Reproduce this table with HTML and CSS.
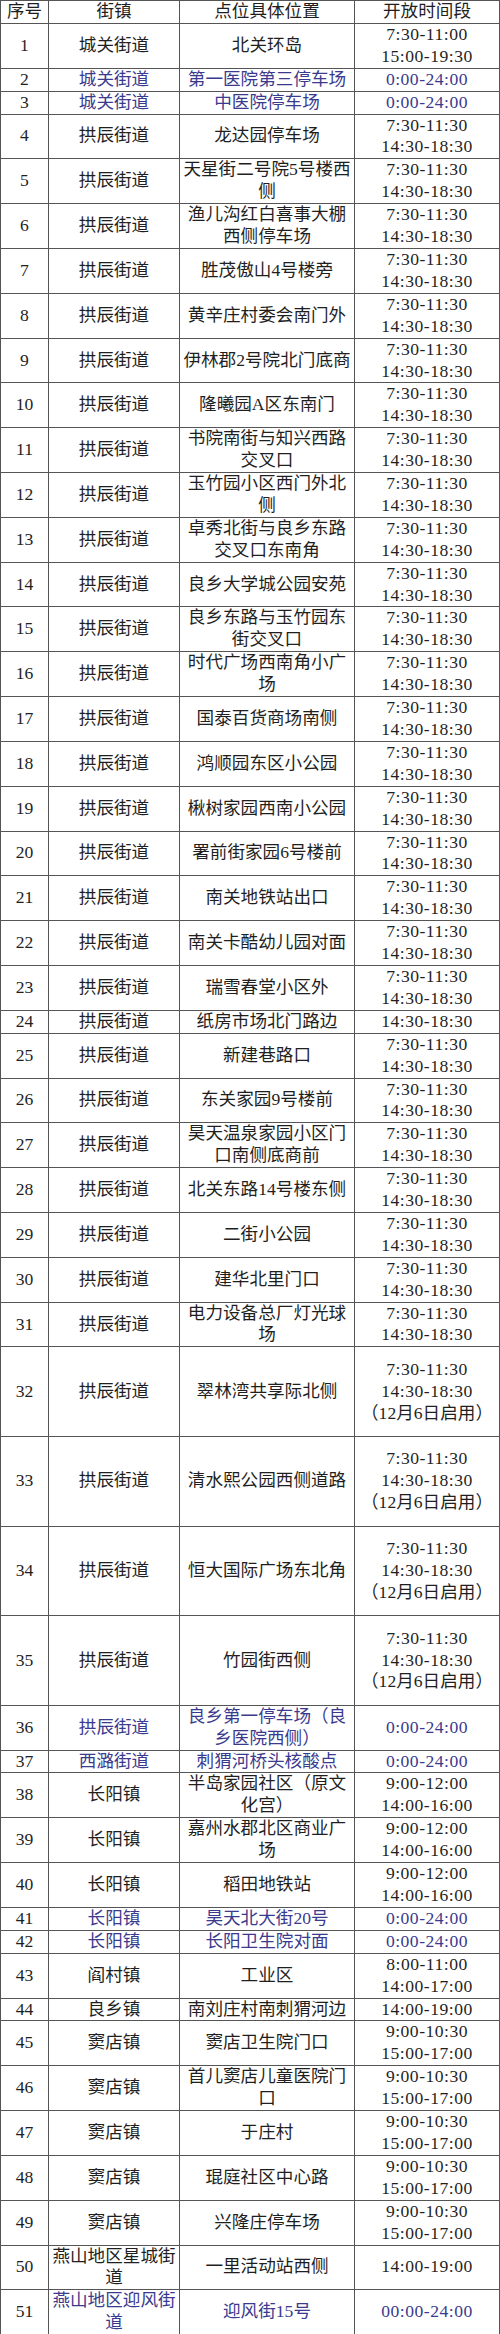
FILE: index.html
```html
<!DOCTYPE html>
<html lang="zh-CN">
<head>
<meta charset="utf-8">
<title>核酸检测点位</title>
<link rel="stylesheet" href="styles.css">
</head>
<body>
<table class="sites">
<colgroup>
<col class="c-no"><col class="c-town"><col class="c-loc"><col class="c-time">
</colgroup>
<thead>
<tr class="l1"><th>序号</th><th>街镇</th><th>点位具体位置</th><th>开放时间段</th></tr>
</thead>
<tbody>
<tr><td>1</td><td>城关街道</td><td>北关环岛</td><td class="t">7:30-11:00<br>15:00-19:30</td></tr>
<tr class="l1 blue"><td>2</td><td>城关街道</td><td>第一医院第三停车场</td><td class="t">0:00-24:00</td></tr>
<tr class="l1 blue"><td>3</td><td>城关街道</td><td>中医院停车场</td><td class="t">0:00-24:00</td></tr>
<tr><td>4</td><td>拱辰街道</td><td>龙达园停车场</td><td class="t">7:30-11:30<br>14:30-18:30</td></tr>
<tr><td>5</td><td>拱辰街道</td><td>天星街二号院5号楼西侧</td><td class="t">7:30-11:30<br>14:30-18:30</td></tr>
<tr><td>6</td><td>拱辰街道</td><td>渔儿沟红白喜事大棚西侧停车场</td><td class="t">7:30-11:30<br>14:30-18:30</td></tr>
<tr><td>7</td><td>拱辰街道</td><td>胜茂傲山4号楼旁</td><td class="t">7:30-11:30<br>14:30-18:30</td></tr>
<tr><td>8</td><td>拱辰街道</td><td>黄辛庄村委会南门外</td><td class="t">7:30-11:30<br>14:30-18:30</td></tr>
<tr><td>9</td><td>拱辰街道</td><td>伊林郡2号院北门底商</td><td class="t">7:30-11:30<br>14:30-18:30</td></tr>
<tr><td>10</td><td>拱辰街道</td><td>隆曦园A区东南门</td><td class="t">7:30-11:30<br>14:30-18:30</td></tr>
<tr><td>11</td><td>拱辰街道</td><td>书院南街与知兴西路交叉口</td><td class="t">7:30-11:30<br>14:30-18:30</td></tr>
<tr><td>12</td><td>拱辰街道</td><td>玉竹园小区西门外北侧</td><td class="t">7:30-11:30<br>14:30-18:30</td></tr>
<tr><td>13</td><td>拱辰街道</td><td>卓秀北街与良乡东路交叉口东南角</td><td class="t">7:30-11:30<br>14:30-18:30</td></tr>
<tr><td>14</td><td>拱辰街道</td><td>良乡大学城公园安苑</td><td class="t">7:30-11:30<br>14:30-18:30</td></tr>
<tr><td>15</td><td>拱辰街道</td><td>良乡东路与玉竹园东街交叉口</td><td class="t">7:30-11:30<br>14:30-18:30</td></tr>
<tr><td>16</td><td>拱辰街道</td><td>时代广场西南角小广场</td><td class="t">7:30-11:30<br>14:30-18:30</td></tr>
<tr><td>17</td><td>拱辰街道</td><td>国泰百货商场南侧</td><td class="t">7:30-11:30<br>14:30-18:30</td></tr>
<tr><td>18</td><td>拱辰街道</td><td>鸿顺园东区小公园</td><td class="t">7:30-11:30<br>14:30-18:30</td></tr>
<tr><td>19</td><td>拱辰街道</td><td>楸树家园西南小公园</td><td class="t">7:30-11:30<br>14:30-18:30</td></tr>
<tr><td>20</td><td>拱辰街道</td><td>署前街家园6号楼前</td><td class="t">7:30-11:30<br>14:30-18:30</td></tr>
<tr><td>21</td><td>拱辰街道</td><td>南关地铁站出口</td><td class="t">7:30-11:30<br>14:30-18:30</td></tr>
<tr><td>22</td><td>拱辰街道</td><td>南关卡酷幼儿园对面</td><td class="t">7:30-11:30<br>14:30-18:30</td></tr>
<tr><td>23</td><td>拱辰街道</td><td>瑞雪春堂小区外</td><td class="t">7:30-11:30<br>14:30-18:30</td></tr>
<tr class="l1"><td>24</td><td>拱辰街道</td><td>纸房市场北门路边</td><td class="t">14:30-18:30</td></tr>
<tr><td>25</td><td>拱辰街道</td><td>新建巷路口</td><td class="t">7:30-11:30<br>14:30-18:30</td></tr>
<tr><td>26</td><td>拱辰街道</td><td>东关家园9号楼前</td><td class="t">7:30-11:30<br>14:30-18:30</td></tr>
<tr><td>27</td><td>拱辰街道</td><td>昊天温泉家园小区门口南侧底商前</td><td class="t">7:30-11:30<br>14:30-18:30</td></tr>
<tr><td>28</td><td>拱辰街道</td><td>北关东路14号楼东侧</td><td class="t">7:30-11:30<br>14:30-18:30</td></tr>
<tr><td>29</td><td>拱辰街道</td><td>二街小公园</td><td class="t">7:30-11:30<br>14:30-18:30</td></tr>
<tr><td>30</td><td>拱辰街道</td><td>建华北里门口</td><td class="t">7:30-11:30<br>14:30-18:30</td></tr>
<tr><td>31</td><td>拱辰街道</td><td>电力设备总厂灯光球场</td><td class="t">7:30-11:30<br>14:30-18:30</td></tr>
<tr class="l4"><td>32</td><td>拱辰街道</td><td>翠林湾共享际北侧</td><td class="t">7:30-11:30<br>14:30-18:30<br><span class="note">（12月6日启用）</span></td></tr>
<tr class="l4"><td>33</td><td>拱辰街道</td><td>清水熙公园西侧道路</td><td class="t">7:30-11:30<br>14:30-18:30<br><span class="note">（12月6日启用）</span></td></tr>
<tr class="l4"><td>34</td><td>拱辰街道</td><td>恒大国际广场东北角</td><td class="t">7:30-11:30<br>14:30-18:30<br><span class="note">（12月6日启用）</span></td></tr>
<tr class="l4"><td>35</td><td>拱辰街道</td><td>竹园街西侧</td><td class="t">7:30-11:30<br>14:30-18:30<br><span class="note">（12月6日启用）</span></td></tr>
<tr class="blue"><td>36</td><td>拱辰街道</td><td>良乡第一停车场（良乡医院西侧）</td><td class="t">0:00-24:00</td></tr>
<tr class="l1 blue"><td>37</td><td>西潞街道</td><td>刺猬河桥头核酸点</td><td class="t">0:00-24:00</td></tr>
<tr><td>38</td><td>长阳镇</td><td>半岛家园社区（原文化宫）</td><td class="t">9:00-12:00<br>14:00-16:00</td></tr>
<tr><td>39</td><td>长阳镇</td><td>嘉州水郡北区商业广场</td><td class="t">9:00-12:00<br>14:00-16:00</td></tr>
<tr><td>40</td><td>长阳镇</td><td>稻田地铁站</td><td class="t">9:00-12:00<br>14:00-16:00</td></tr>
<tr class="l1 blue"><td>41</td><td>长阳镇</td><td>昊天北大街20号</td><td class="t">0:00-24:00</td></tr>
<tr class="l1 blue"><td>42</td><td>长阳镇</td><td>长阳卫生院对面</td><td class="t">0:00-24:00</td></tr>
<tr><td>43</td><td>阎村镇</td><td>工业区</td><td class="t">8:00-11:00<br>14:00-17:00</td></tr>
<tr class="l1"><td>44</td><td>良乡镇</td><td>南刘庄村南刺猬河边</td><td class="t">14:00-19:00</td></tr>
<tr><td>45</td><td>窦店镇</td><td>窦店卫生院门口</td><td class="t">9:00-10:30<br>15:00-17:00</td></tr>
<tr><td>46</td><td>窦店镇</td><td>首儿窦店儿童医院门口</td><td class="t">9:00-10:30<br>15:00-17:00</td></tr>
<tr><td>47</td><td>窦店镇</td><td>于庄村</td><td class="t">9:00-10:30<br>15:00-17:00</td></tr>
<tr><td>48</td><td>窦店镇</td><td>琨庭社区中心路</td><td class="t">9:00-10:30<br>15:00-17:00</td></tr>
<tr><td>49</td><td>窦店镇</td><td>兴隆庄停车场</td><td class="t">9:00-10:30<br>15:00-17:00</td></tr>
<tr><td>50</td><td>燕山地区星城街道</td><td>一里活动站西侧</td><td class="t">14:00-19:00</td></tr>
<tr class="blue"><td>51</td><td>燕山地区迎风街道</td><td>迎风街15号</td><td class="t">00:00-24:00</td></tr>
</tbody>
</table>
</body>
</html>
```
FILE: styles.css
```css
html, body {
  margin: 0;
  padding: 0;
  background: #ffffff;
}

.sites {
  border-collapse: collapse;
  table-layout: fixed;
  width: 499px;
  font-family: "Liberation Serif", "Noto Sans CJK SC", serif;
  font-size: 17.6px;
  line-height: 21.9px;
  color: #1f1f1f;
}

.c-no { width: 48px; }
.c-town { width: 131px; }
.c-loc { width: 175px; }
.c-time { width: 145px; }

.sites th,
.sites td {
  border: 1px solid #555555;
  padding: 0;
  text-align: center;
  vertical-align: middle;
  font-weight: normal;
  word-break: break-all;
}

.sites .t {
  letter-spacing: 0.5px;
}

.sites .note {
  letter-spacing: 0;
}

.sites tr.l4 td {
  height: 88.6px;
}

.sites tr.blue td {
  color: #3a3a8e;
}

.sites tr.blue td:first-child {
  color: #1f1f1f;
}
```
